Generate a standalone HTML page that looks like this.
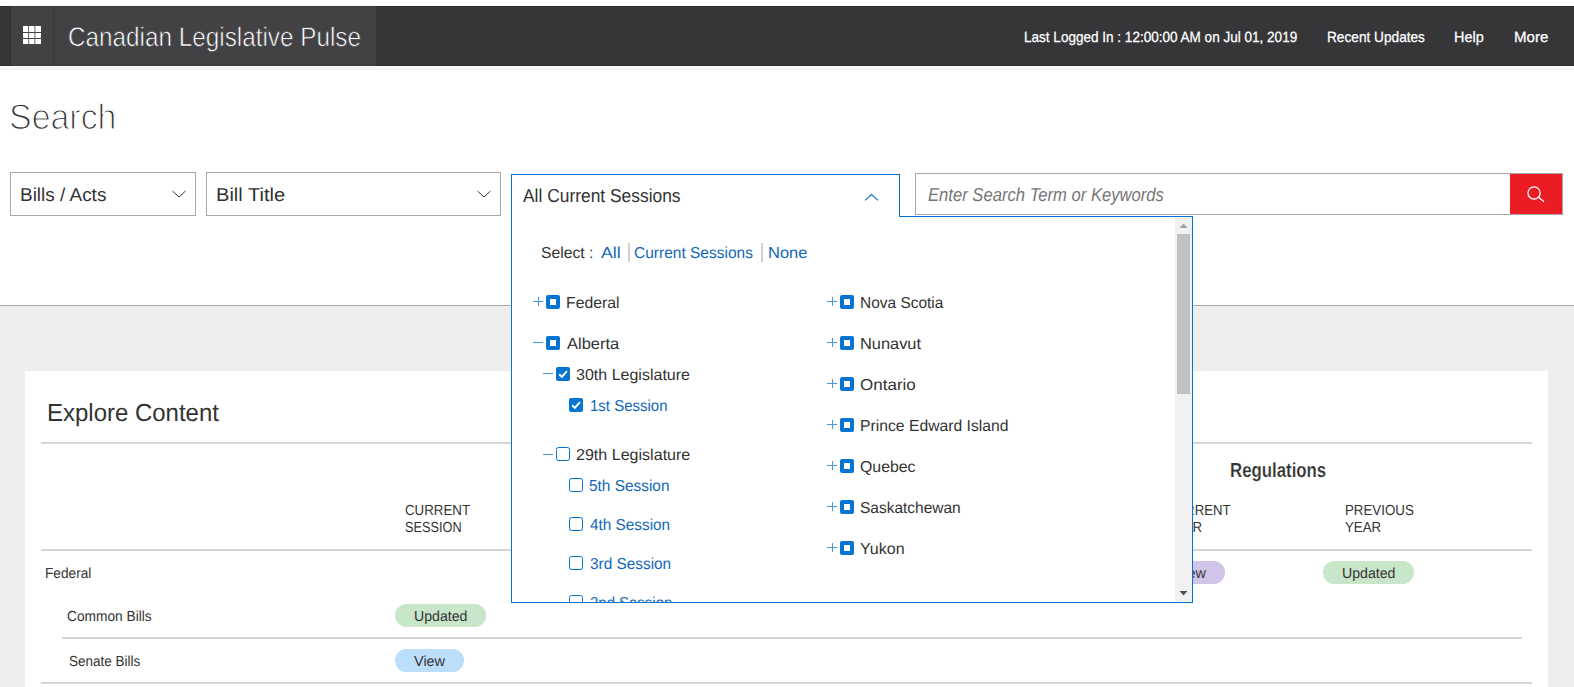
<!DOCTYPE html>
<html lang="en"><head><meta charset="utf-8"><title>Canadian Legislative Pulse</title>
<style>
html,body{margin:0;padding:0}
body{width:1574px;height:687px;overflow:hidden;position:relative;background:#fff;font-family:"Liberation Sans", sans-serif;}
.abs,.t,.cb,.ln,.sep{position:absolute;display:block}
.t{white-space:pre;transform-origin:0 0;text-rendering:geometricPrecision}
.cb{width:14px;height:14px;box-sizing:border-box;border-radius:2px}
.cb.ind{background:#0675d1}
.cb.ind b{position:absolute;left:4px;top:4px;width:6px;height:6px;background:#fff}
.cb.emp{border:1px solid #0675d1;background:#fff;border-radius:2.5px}
.ln{background:#4a94dc}
.sep{width:2px;height:19px;background:#d0d0d0}
.clip{position:absolute;overflow:hidden}
.pill{position:absolute;height:23px;border-radius:12px}
.hl{position:absolute;height:2px;background:#d6d6d6}
</style></head><body>
<!-- header -->
<div class="abs" style="left:0;top:6px;width:1574px;height:60px;background:#363638;border-top:1px solid #2b2b2d;border-bottom:1px solid #2b2b2d;box-sizing:border-box"></div>
<div class="abs" style="left:11px;top:6px;width:365px;height:60px;background:#424244;border-top:1px solid #38383a;border-bottom:1px solid #38383a;box-sizing:border-box"></div>
<div class="abs" style="left:10px;top:7px;width:1px;height:58px;background:#323234"></div>
<div class="abs" style="left:53px;top:7px;width:1px;height:58px;background:#3a3a3c"></div>
<div class="abs" style="left:0;top:67px;width:1574px;height:3px;background:#f4f4f4"></div>
<svg class="abs" style="left:23px;top:26px" width="18" height="18" viewBox="0 0 18 18"><g fill="#fff"><rect x="0" y="0" width="5.3" height="6"/><rect x="6.1" y="0" width="5.4" height="6"/><rect x="12.3" y="0" width="5.7" height="6"/><rect x="0" y="7" width="5.3" height="5"/><rect x="6.1" y="7" width="5.4" height="5"/><rect x="12.3" y="7" width="5.7" height="5"/><rect x="0" y="13" width="5.3" height="5"/><rect x="6.1" y="13" width="5.4" height="5"/><rect x="12.3" y="13" width="5.7" height="5"/></g></svg>
<!-- page background below search -->
<div class="abs" style="left:0;top:305px;width:1574px;height:382px;background:#eeeeee;border-top:1px solid #aaaaaa;box-sizing:border-box"></div>
<!-- card -->
<div class="abs" style="left:25px;top:371px;width:1523px;height:316px;background:#fff"></div>
<div class="hl" style="left:41px;top:442px;width:1491px"></div>
<div class="hl" style="left:41px;top:549px;width:1491px"></div>
<div class="hl" style="left:62px;top:637px;width:1460px"></div>
<div class="hl" style="left:41px;top:682px;width:1491px"></div>
<div class="pill" style="left:395px;top:604px;width:91px;background:#c8e6c9"></div>
<div class="pill" style="left:395px;top:649px;width:69px;background:#bbdefb"></div>
<div class="pill" style="left:1156px;top:561px;width:69px;background:#d1c4e9"></div>
<div class="pill" style="left:1323px;top:561px;width:91px;background:#c8e6c9"></div>
<span class="t" style="left:46.9px;top:402px;font-size:24px;line-height:24px;color:#333;transform-origin:0 19px;transform:scale(0.9991,1.03);">Explore Content</span><span class="t" style="left:1230.35px;top:461px;font-size:20px;line-height:20px;color:#333;transform-origin:0 16px;transform:scale(0.8406,1.02);font-weight:bold;-webkit-text-stroke:0.2px #fff;">Regulations</span><span class="t" style="left:404.86px;top:503px;font-size:14px;line-height:14px;color:#333;transform-origin:0 12px;transform:scale(0.9516,1.04);">CURRENT</span><span class="t" style="left:404.6px;top:520px;font-size:14px;line-height:14px;color:#333;transform-origin:0 12px;transform:scale(0.9093,1.04);">SESSION</span><span class="t" style="left:1166.37px;top:503px;font-size:14px;line-height:14px;color:#333;transform-origin:0 12px;transform:scale(0.9451,1.04);">CURRENT</span><span class="t" style="left:1165.51px;top:520px;font-size:14px;line-height:14px;color:#333;transform-origin:0 12px;transform:scale(0.9484,1.04);">YEAR</span><span class="t" style="left:1344.9px;top:503px;font-size:14px;line-height:14px;color:#333;transform-origin:0 12px;transform:scale(0.9502,1.04);">PREVIOUS</span><span class="t" style="left:1344.51px;top:520px;font-size:14px;line-height:14px;color:#333;transform-origin:0 12px;transform:scale(0.9484,1.04);">YEAR</span><span class="t" style="left:45.4px;top:566px;font-size:14px;line-height:14px;color:#333;transform-origin:0 12px;transform:scale(0.9771,1.04);">Federal</span><span class="t" style="left:67.04px;top:609px;font-size:14px;line-height:14px;color:#333;transform-origin:0 12px;transform:scale(0.9801,1.04);">Common Bills</span><span class="t" style="left:69.1px;top:654px;font-size:14px;line-height:14px;color:#333;transform-origin:0 12px;transform:scale(0.9642,1.04);">Senate Bills</span><span class="t" style="left:413.6px;top:609px;font-size:14px;line-height:14px;color:#333;transform-origin:0 12px;transform:scale(1.0106,1.04);">Updated</span><span class="t" style="left:413.86px;top:654px;font-size:14px;line-height:14px;color:#333;transform-origin:0 12px;transform:scale(1.032,1.04);">View</span><span class="t" style="left:1176.96px;top:566px;font-size:14px;line-height:14px;color:#333;transform-origin:0 12px;transform:scale(1.0272,1.04);">New</span><span class="t" style="left:1341.5px;top:566px;font-size:14px;line-height:14px;color:#333;transform-origin:0 12px;transform:scale(1.0106,1.04);">Updated</span>
<!-- search row -->
<div class="abs" style="left:10px;top:172px;width:186px;height:44px;border:1px solid #a9a9a9;box-sizing:border-box;background:#fff"></div>
<div class="abs" style="left:206px;top:172px;width:295px;height:44px;border:1px solid #a9a9a9;box-sizing:border-box;background:#fff"></div>
<svg class="abs" style="left:170px;top:188px" width="18" height="12"><path d="M2.5 3 L9 9 L15.5 3" fill="none" stroke="#333" stroke-width="1"/></svg>
<svg class="abs" style="left:475px;top:188px" width="18" height="12"><path d="M2.5 3 L9 9 L15.5 3" fill="none" stroke="#333" stroke-width="1"/></svg>
<div class="abs" style="left:915px;top:173px;width:648px;height:42px;border:1px solid #a9a9a9;box-sizing:border-box;background:#fff"></div>
<div class="abs" style="left:1510px;top:174px;width:52px;height:40px;background:#ec1c24"></div>
<svg class="abs" style="left:1522px;top:182px" width="26" height="26" viewBox="0 0 26 26"><circle cx="12.05" cy="10.9" r="6.1" fill="none" stroke="#fff" stroke-width="1.3"/><path d="M16.6 15.2 L22 19.8" stroke="#fff" stroke-width="1.3" fill="none"/></svg>
<!-- session dropdown -->
<div class="abs" style="left:511px;top:174px;width:389px;height:44px;border:1px solid #0675d1;border-bottom:none;box-sizing:border-box;background:#fff"></div>
<div class="abs" style="left:511px;top:216px;width:682px;height:387px;border:1px solid #0675d1;box-sizing:border-box;background:#fff"></div>
<div class="abs" style="left:512px;top:215px;width:387px;height:3px;background:#fff"></div>
<svg class="abs" style="left:862px;top:190px" width="20" height="14"><path d="M3 10.4 L9.5 4.5 L16 10.4" fill="none" stroke="#0675d1" stroke-width="1.15"/></svg>
<div class="clip" style="left:512px;top:217px;width:680px;height:385px"><div class="abs" style="left:-512px;top:-217px;width:1574px;height:687px">
<i class="ln" style="left:533px;top:301px;width:10px;height:1px"></i><i class="ln" style="left:538px;top:297px;width:1px;height:9px"></i><i class="cb ind" style="left:546px;top:295px"><b></b></i><i class="ln" style="left:533px;top:342px;width:10px;height:1px"></i><i class="cb ind" style="left:546px;top:336px"><b></b></i><i class="ln" style="left:543px;top:373px;width:10px;height:1px"></i><svg class="abs" style="left:556px;top:367px" width="14" height="14" viewBox="0 0 14 14"><rect width="14" height="14" rx="2" fill="#0675d1"/><path d="M3.2 7.2 L5.9 9.9 L10.9 4.2" fill="none" stroke="#fff" stroke-width="2"/></svg><svg class="abs" style="left:569px;top:398px" width="14" height="14" viewBox="0 0 14 14"><rect width="14" height="14" rx="2" fill="#0675d1"/><path d="M3.2 7.2 L5.9 9.9 L10.9 4.2" fill="none" stroke="#fff" stroke-width="2"/></svg><i class="ln" style="left:543px;top:454px;width:10px;height:1px"></i><i class="cb emp" style="left:556px;top:447px"></i><i class="cb emp" style="left:569px;top:478px"></i><i class="cb emp" style="left:569px;top:517px"></i><i class="cb emp" style="left:569px;top:556px"></i><i class="cb emp" style="left:569px;top:595px"></i><i class="ln" style="left:827px;top:301px;width:10px;height:1px"></i><i class="ln" style="left:832px;top:297px;width:1px;height:9px"></i><i class="cb ind" style="left:840px;top:295px"><b></b></i><i class="ln" style="left:827px;top:342px;width:10px;height:1px"></i><i class="ln" style="left:832px;top:338px;width:1px;height:9px"></i><i class="cb ind" style="left:840px;top:336px"><b></b></i><i class="ln" style="left:827px;top:383px;width:10px;height:1px"></i><i class="ln" style="left:832px;top:379px;width:1px;height:9px"></i><i class="cb ind" style="left:840px;top:377px"><b></b></i><i class="ln" style="left:827px;top:424px;width:10px;height:1px"></i><i class="ln" style="left:832px;top:420px;width:1px;height:9px"></i><i class="cb ind" style="left:840px;top:418px"><b></b></i><i class="ln" style="left:827px;top:465px;width:10px;height:1px"></i><i class="ln" style="left:832px;top:461px;width:1px;height:9px"></i><i class="cb ind" style="left:840px;top:459px"><b></b></i><i class="ln" style="left:827px;top:506px;width:10px;height:1px"></i><i class="ln" style="left:832px;top:502px;width:1px;height:9px"></i><i class="cb ind" style="left:840px;top:500px"><b></b></i><i class="ln" style="left:827px;top:547px;width:10px;height:1px"></i><i class="ln" style="left:832px;top:543px;width:1px;height:9px"></i><i class="cb ind" style="left:840px;top:541px"><b></b></i><i class="sep" style="left:628px;top:243px"></i><i class="sep" style="left:761px;top:243px"></i><div class="abs" style="left:1175px;top:217px;width:17px;height:385px;background:#f1f1f1"></div><div class="abs" style="left:1177px;top:234px;width:13px;height:160px;background:#c1c1c1"></div><svg class="abs" style="left:1175px;top:217px" width="17" height="17"><path d="M4.5 11 L8.5 6.6 L12.5 11 Z" fill="#a3a3a3"/></svg><svg class="abs" style="left:1175px;top:585px" width="17" height="17"><path d="M4.5 6 L12.5 6 L8.5 10.4 Z" fill="#505050"/></svg>
<span class="t" style="left:541.47px;top:246px;font-size:16px;line-height:16px;color:#333;transform-origin:0 12px;transform:scale(0.9812,0.99);">Select :</span><span class="t" style="left:600.56px;top:246px;font-size:16px;line-height:16px;color:#1167b8;transform-origin:0 12px;transform:scale(1.1069,0.99);">All</span><span class="t" style="left:634.1px;top:246px;font-size:16px;line-height:16px;color:#1167b8;transform-origin:0 12px;transform:scale(0.9693,0.99);">Current Sessions</span><span class="t" style="left:767.78px;top:246px;font-size:16px;line-height:16px;color:#1167b8;transform-origin:0 12px;transform:scale(1.0292,0.99);">None</span><span class="t" style="left:566.02px;top:296px;font-size:16px;line-height:16px;color:#333;transform-origin:0 12px;transform:scale(0.9865,0.99);">Federal</span><span class="t" style="left:567.07px;top:337px;font-size:16px;line-height:16px;color:#333;transform-origin:0 12px;transform:scale(1.0307,0.99);">Alberta</span><span class="t" style="left:576.39px;top:368px;font-size:16px;line-height:16px;color:#333;transform-origin:0 12px;transform:scale(1.0012,0.99);">30th Legislature</span><span class="t" style="left:590.09px;top:399px;font-size:16px;line-height:16px;color:#1167b8;transform-origin:0 12px;transform:scale(0.9372,0.99);">1st Session</span><span class="t" style="left:576.2px;top:448px;font-size:16px;line-height:16px;color:#333;transform-origin:0 12px;transform:scale(1.0039,0.99);">29th Legislature</span><span class="t" style="left:589.2px;top:479px;font-size:16px;line-height:16px;color:#1167b8;transform-origin:0 12px;transform:scale(0.9625,0.99);">5th Session</span><span class="t" style="left:589.87px;top:518px;font-size:16px;line-height:16px;color:#1167b8;transform-origin:0 12px;transform:scale(0.9582,0.99);">4th Session</span><span class="t" style="left:589.5px;top:557px;font-size:16px;line-height:16px;color:#1167b8;transform-origin:0 12px;transform:scale(0.9605,0.99);">3rd Session</span><span class="t" style="left:589.53px;top:596px;font-size:16px;line-height:16px;color:#1167b8;transform-origin:0 12px;transform:scale(0.9342,0.99);">2nd Session</span><span class="t" style="left:859.66px;top:296px;font-size:16px;line-height:16px;color:#333;transform-origin:0 12px;transform:scale(0.9661,0.99);">Nova Scotia</span><span class="t" style="left:859.58px;top:337px;font-size:16px;line-height:16px;color:#333;transform-origin:0 12px;transform:scale(1.0238,0.99);">Nunavut</span><span class="t" style="left:860.07px;top:378px;font-size:16px;line-height:16px;color:#333;transform-origin:0 12px;transform:scale(1.0635,0.99);">Ontario</span><span class="t" style="left:859.63px;top:419px;font-size:16px;line-height:16px;color:#333;transform-origin:0 12px;transform:scale(0.9824,0.99);">Prince Edward Island</span><span class="t" style="left:860.1px;top:460px;font-size:16px;line-height:16px;color:#333;transform-origin:0 12px;transform:scale(0.9908,0.99);">Quebec</span><span class="t" style="left:859.77px;top:501px;font-size:16px;line-height:16px;color:#333;transform-origin:0 12px;transform:scale(0.9674,0.99);">Saskatchewan</span><span class="t" style="left:860.2px;top:542px;font-size:16px;line-height:16px;color:#333;transform-origin:0 12px;transform:scale(1.0017,0.99);">Yukon</span>
</div></div>
<span class="t" style="left:68.23px;top:24px;font-size:26px;line-height:26px;color:#fff;transform-origin:0 22px;transform:scale(0.9342,1.03);-webkit-text-stroke:0.6px #414143;">Canadian Legislative Pulse</span><span class="t" style="left:1024.44px;top:30px;font-size:14px;line-height:14px;color:#fff;transform-origin:0 12px;transform:scale(0.9669,1.06);-webkit-text-stroke:0.25px #fff;">Last Logged In : 12:00:00 AM on Jul 01, 2019</span><span class="t" style="left:1327.39px;top:30px;font-size:14px;line-height:14px;color:#fff;transform-origin:0 12px;transform:scale(0.9757,1.06);-webkit-text-stroke:0.25px #fff;">Recent Updates</span><span class="t" style="left:1454.49px;top:30px;font-size:14px;line-height:14px;color:#fff;transform-origin:0 12px;transform:scale(1.0323,1.06);-webkit-text-stroke:0.25px #fff;">Help</span><span class="t" style="left:1513.88px;top:30px;font-size:14px;line-height:14px;color:#fff;transform-origin:0 12px;transform:scale(1.0757,1.06);-webkit-text-stroke:0.25px #fff;">More</span><span class="t" style="left:9.19px;top:100px;font-size:35px;line-height:35px;color:#333;transform-origin:0 29px;transform:scale(0.9693,1.02);-webkit-text-stroke:1.2px #fff;">Search</span><span class="t" style="left:20.04px;top:186px;font-size:18px;line-height:18px;color:#333;transform-origin:0 15px;transform:scale(1.0529,1.04);">Bills / Acts</span><span class="t" style="left:215.93px;top:186px;font-size:18px;line-height:18px;color:#333;transform-origin:0 15px;transform:scale(1.1157,1.04);">Bill Title</span><span class="t" style="left:522.66px;top:187px;font-size:18px;line-height:18px;color:#333;transform-origin:0 15px;transform:scale(0.9662,1.04);">All Current Sessions</span><span class="t" style="left:927.68px;top:186px;font-size:18px;line-height:18px;color:#767676;transform-origin:0 15px;transform:scale(0.9235,1.04);font-style:italic;">Enter Search Term or Keywords</span>
</body></html>
